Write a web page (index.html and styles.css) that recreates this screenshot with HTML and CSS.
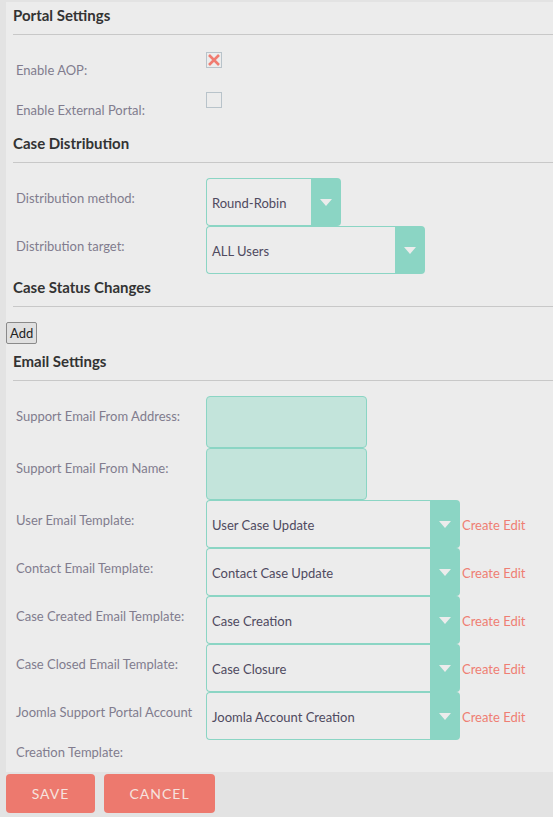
FILE: index.html
```html
<!DOCTYPE html>
<html>
<head>
<meta charset="utf-8">
<link rel="stylesheet" href="styles.css">
</head>
<body>
<div class="panel">
  <h2 class="hd hd-first">Portal Settings</h2>
  <div class="sect">
    <div class="row r40">
      <div class="lbl">Enable AOP:</div>
      <div class="fld"><span class="cb"><svg width="14" height="14" viewBox="0 0 14 14"><path d="M2 2 L12 12 M12 2 L2 12" stroke="#f07b70" stroke-width="2.6" stroke-linecap="butt"/></svg></span></div>
    </div>
    <div class="row r40">
      <div class="lbl">Enable External Portal:</div>
      <div class="fld"><span class="cb"></span></div>
    </div>
  </div>

  <h2 class="hd">Case Distribution</h2>
  <div class="sect">
    <div class="row r48">
      <div class="lbl">Distribution method:</div>
      <div class="fld"><div class="sel w135"><span class="sel-txt">Round-Robin</span><span class="sel-arr"><i class="tri"></i></span></div></div>
    </div>
    <div class="row r48">
      <div class="lbl">Distribution target:</div>
      <div class="fld"><div class="sel w219"><span class="sel-txt">ALL Users</span><span class="sel-arr"><i class="tri"></i></span></div></div>
    </div>
  </div>

  <h2 class="hd">Case Status Changes</h2>
  <div class="sect sect-btn">
    <button class="add">Add</button>
  </div>

  <h2 class="hd hd-email">Email Settings</h2>
  <div class="sect">
    <div class="row r52">
      <div class="lbl">Support Email From Address:</div>
      <div class="fld"><div class="inp"></div></div>
    </div>
    <div class="row r52">
      <div class="lbl">Support Email From Name:</div>
      <div class="fld"><div class="inp"></div></div>
    </div>
    <div class="row r48">
      <div class="lbl">User Email Template:</div>
      <div class="fld"><div class="sel w254"><span class="sel-txt">User Case Update</span><span class="sel-arr"><i class="tri"></i></span></div><span class="links">Create Edit</span></div>
    </div>
    <div class="row r48">
      <div class="lbl">Contact Email Template:</div>
      <div class="fld"><div class="sel w254"><span class="sel-txt">Contact Case Update</span><span class="sel-arr"><i class="tri"></i></span></div><span class="links">Create Edit</span></div>
    </div>
    <div class="row r48">
      <div class="lbl">Case Created Email Template:</div>
      <div class="fld"><div class="sel w254"><span class="sel-txt">Case Creation</span><span class="sel-arr"><i class="tri"></i></span></div><span class="links">Create Edit</span></div>
    </div>
    <div class="row r48">
      <div class="lbl">Case Closed Email Template:</div>
      <div class="fld"><div class="sel w254"><span class="sel-txt">Case Closure</span><span class="sel-arr"><i class="tri"></i></span></div><span class="links">Create Edit</span></div>
    </div>
    <div class="row r-auto">
      <div class="lbl">Joomla Support Portal Account Creation Template:</div>
      <div class="fld"><div class="sel w254"><span class="sel-txt">Joomla Account Creation</span><span class="sel-arr"><i class="tri"></i></span></div><span class="links">Create Edit</span></div>
    </div>
  </div>
</div>
<div class="actions">
  <button class="btn btn-save">SAVE</button>
  <button class="btn btn-cancel">CANCEL</button>
</div>
</body>
</html>
```

FILE: styles.css
```css
html, body {
  margin: 0;
  padding: 0;
}
body {
  background: #e3e3e3;
  font-family: Lato, "Open Sans", sans-serif;
  width: 553px;
  height: 817px;
  overflow: hidden;
}
.panel {
  margin: 2px 0 0 6px;
  background: #ececec;
  height: 770px;
  overflow: hidden;
}
.hd {
  margin: 3px 0 0 7px;
  font-size: 15px;
  line-height: 20px;
  font-weight: 700;
  color: #333333;
  padding-bottom: 9px;
  border-bottom: 1px solid #c8c8c8;
}
.hd-email {
  margin-top: 7px;
}
.sect {
  padding-top: 15px;
}
.row {
  display: flex;
  align-items: flex-start;
}
.r40 { height: 40px; }
.r48 { height: 48px; }
.r52 { height: 52px; }
.lbl {
  width: 190px;
  padding-left: 10px;
  flex: none;
  font-size: 13px;
  line-height: 40px;
  color: #817c8e;
}
.fld {
  display: flex;
  align-items: flex-start;
}
.cb {
  display: flex;
  align-items: center;
  justify-content: center;
  box-sizing: border-box;
  width: 16px;
  height: 16px;
  margin-top: 2px;
  border: 1px solid #b8c3ca;
}
.sel {
  display: flex;
  height: 48px;
  box-sizing: border-box;
}
.w135 { width: 135px; }
.w219 { width: 219px; }
.w254 { width: 254px; }
.sel-txt {
  flex: 1;
  box-sizing: border-box;
  border: 1px solid #8bd5c4;
  border-right: none;
  border-radius: 4px 0 0 4px;
  padding: 2px 0 0 5px;
  font-size: 13px;
  line-height: 44px;
  color: #4f4a60;
  white-space: nowrap;
}
.sel-arr {
  width: 30px;
  flex: none;
  background: #8bd5c4;
  border-radius: 0 4px 4px 0;
  display: flex;
  align-items: center;
  justify-content: center;
}
.tri {
  display: block;
  width: 0;
  height: 0;
  border-left: 6px solid transparent;
  border-right: 6px solid transparent;
  border-top: 7px solid #ececec;
  margin-top: 1px;
}
.links {
  margin-left: 2px;
  padding-top: 2px;
  font-size: 13px;
  line-height: 46px;
  color: #ef7e73;
  white-space: nowrap;
}
.inp {
  width: 161px;
  height: 52px;
  box-sizing: border-box;
  background: #c3e4db;
  border: 1px solid #8bd5c4;
  border-radius: 4px;
}
.sect-btn {
  height: 22px;
}
.add {
  display: block;
  margin: 0;
  height: 22px;
  box-sizing: border-box;
  padding: 0 3px;
  font-family: Lato, sans-serif;
  font-size: 13px;
  line-height: 20px;
  color: #222;
  background: #e0e0e0;
  border: 1px solid #8a8a8a;
  border-radius: 2px;
}
.actions {
  display: flex;
  gap: 9px;
  margin: 2px 0 0 6px;
}
.btn {
  height: 39px;
  margin: 0;
  border: none;
  border-radius: 4px;
  background: #ed796e;
  color: #f6e3df;
  font-family: Lato, sans-serif;
  font-size: 14px;
  letter-spacing: 1px;
  padding: 0;
}
.btn-save { width: 89px; }
.btn-cancel { width: 111px; }
```
